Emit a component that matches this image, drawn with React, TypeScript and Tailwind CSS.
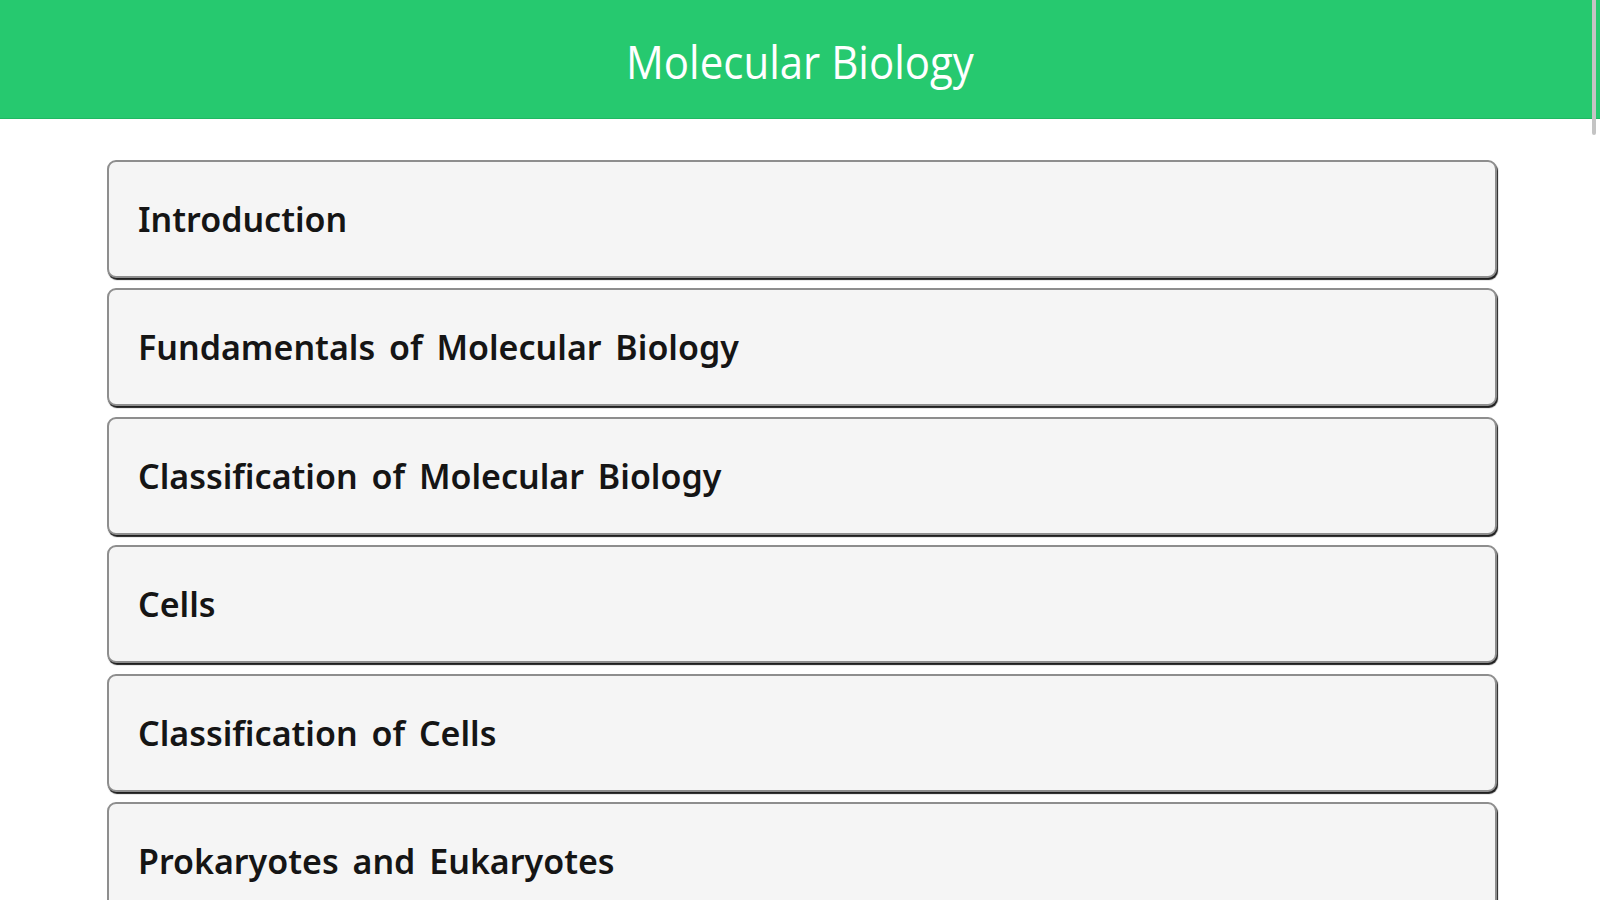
import React from "react";

const items = [
  "Introduction",
  "Fundamentals of Molecular Biology",
  "Classification of Molecular Biology",
  "Cells",
  "Classification of Cells",
  "Prokaryotes and Eukaryotes",
  "Cell Structure",
];

export default function App() {
  return (
    <div className="relative h-[900px] w-[1600px] overflow-hidden bg-white">
      <header className="flex h-[118px] items-center justify-center bg-[#26c96f] pt-[5px] shadow-[0_1px_0_#1fb862]">
        <h1
          className="inline-block scale-y-[1.07] text-[42px] leading-none text-white"
          style={{ fontFamily: '"Open Sans", "Noto Sans", sans-serif' }}
        >
          Molecular Biology
        </h1>
      </header>
      <div className="absolute right-[4px] top-0 h-[135px] w-[4px] rounded-b-full bg-[#c4c4c4]" />
      <main className="flex flex-col gap-[10.4px] pl-[107px] pt-[42px]">
        {items.map((t) => (
          <div
            key={t}
            className="flex h-[118px] w-[1390px] shrink-0 items-center rounded-[9px] border-2 border-[#8e8e8e] bg-[#f5f5f5] pl-[29px] shadow-[1px_2px_1px_#1e1e1e]"
          >
            <span
              className="text-[34px] font-semibold leading-none text-[#151515] [word-spacing:5px]"
              style={{ fontFamily: '"Noto Sans", sans-serif' }}
            >
              {t}
            </span>
          </div>
        ))}
      </main>
    </div>
  );
}
